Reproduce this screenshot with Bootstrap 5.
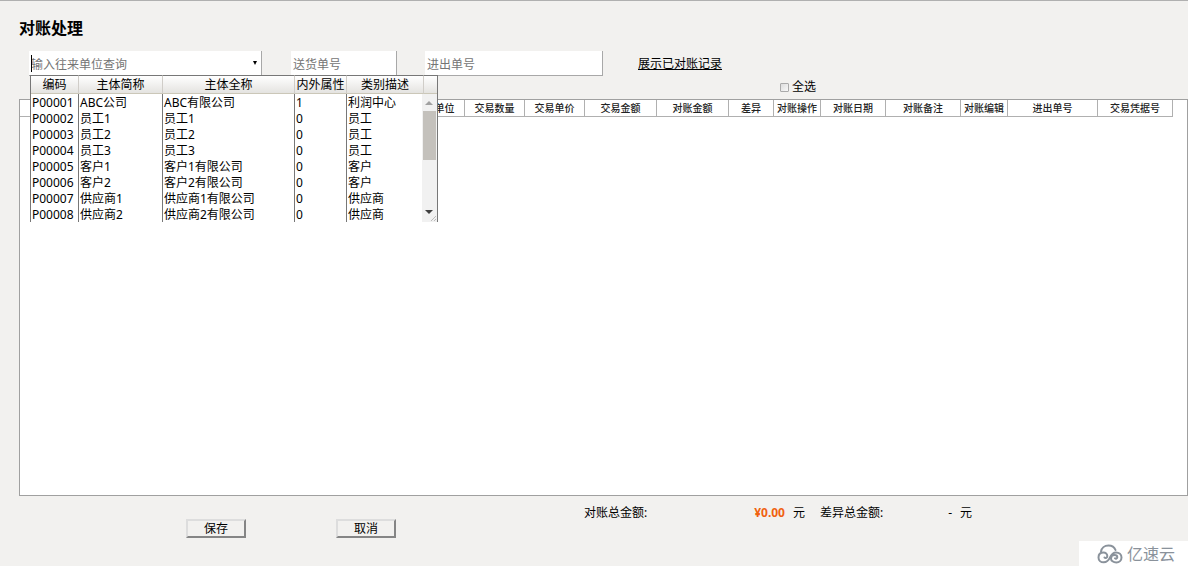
<!DOCTYPE html>
<html lang="zh-CN">
<head>
<meta charset="utf-8">
<meta name="viewport" content="width=device-width, initial-scale=1">
<title>对账处理</title>
<link rel="stylesheet" href="https://cdn.jsdelivr.net/npm/bootstrap@5.3.0/dist/css/bootstrap.min.css">
<style>
body{font:12px/16px "Noto Sans","Noto Sans CJK SC",sans-serif;color:#000;background:#f2f1ef;border-top:1px solid #b0b0b0}
h1{font-size:16px;line-height:24px;font-weight:700;padding:15px 0 0 19px}
.filters{padding:11px 0 0 29px}
.field{height:25px;border:0;border-right:1px solid #a8a8a8;border-bottom:1px solid #a8a8a8;background:#fff;font-size:12px;line-height:24px;padding:2px 2px 0;border-radius:0;outline:0;display:block}
.field::placeholder{color:#757575;opacity:1}
.combo{width:233px;margin-right:29px}
.combo .field{width:100%}
.delivery{width:106px;margin-right:28px}
.stock{width:178px;margin-right:35px}
.caret{width:1px;height:17px;left:2px;top:4px;background:#000}
.arrow{right:5px;top:10px;width:4px;height:4px}
.filters a{color:#000;line-height:25px}
.menu{left:1px;top:24px;width:408px;z-index:5;background:#fff;border-left:1px solid #777;border-right:1px solid #777}
.lookup{table-layout:fixed;width:100%;border-collapse:separate;border-spacing:0}
.lookup th{height:19px;padding:0;font-weight:400;line-height:16px;text-align:center;border-top:1px solid #777;border-bottom:1px solid #cbc7b8;border-right:1px solid #d0cdc8;background:linear-gradient(#fff,#e4e3e0);white-space:nowrap}
.lookup th:last-child{border-right:0}
.lookup td{height:16px;padding:2px 0 0 1px;line-height:14px;border-right:1px solid #777;white-space:nowrap}
.lookup td:nth-child(5){border-right:0}
.track{right:0;top:19px;width:15px;bottom:0;background:#f1f1f1}
.all{padding:3px 0 4px 780px}
.all input{appearance:none;width:9px;height:9px;margin:0;border:1px solid #aaa;border-radius:1px;background:linear-gradient(135deg,#ddd,#f8f8f8)}
.all label{padding-left:3px}
.sheet{margin-left:19px;border:1px solid #a0a0a0;background:#fff;overflow:hidden}
.grid-head{table-layout:fixed;width:1153px;border-collapse:separate;border-spacing:0;font-size:10px;line-height:16px}
.grid-head th{height:17px;padding:0;font-weight:500;color:#222;text-align:center;border-right:1px solid #b0b0b0;border-bottom:1px solid #b0b0b0;white-space:nowrap}
.bottom{height:70px;padding-left:186px}
.bottom button{width:60px;height:19px;margin:23px 90px 0 0;padding:0;border:2px solid;border-color:#ddd #858585 #858585 #ddd;background:#f2f1ef;color:#000;line-height:14px;border-radius:0}
.totals{margin:9px 0 0 98px}
.sum-label{width:100px}
.sum-value{width:101px;text-align:right}
.gap-label{width:96px;margin-left:15px}
.gap-value{width:36px;text-align:right}
.unit{margin-left:8px}
.money{color:#f0620f}
.logo{width:109px;height:25px;background:#fff;color:#8a929b;font-size:16px;line-height:24px;padding-left:18px}
</style>
</head>
<body class="d-flex flex-column min-vh-100">
<h1 class="m-0">对账处理</h1>
<form class="filters d-flex">
  <div class="combo position-relative">
    <input class="field" type="text" aria-label="往来单位" placeholder="输入往来单位查询">
    <span class="caret position-absolute"></span>
    <svg class="arrow position-absolute" viewBox="0 0 4 4"><path d="M0 0h4L2 4z"/></svg>
    <div class="menu position-absolute">
      <table class="lookup">
        <colgroup><col style="width:48px"><col style="width:84px"><col style="width:132px"><col style="width:52px"><col style="width:77px"><col></colgroup>
        <thead><tr><th>编码</th><th>主体简称</th><th>主体全称</th><th>内外属性</th><th>类别描述</th><th></th></tr></thead>
        <tbody>
          <tr><td>P00001</td><td>ABC公司</td><td>ABC有限公司</td><td>1</td><td>利润中心</td></tr>
          <tr><td>P00002</td><td>员工1</td><td>员工1</td><td>0</td><td>员工</td></tr>
          <tr><td>P00003</td><td>员工2</td><td>员工2</td><td>0</td><td>员工</td></tr>
          <tr><td>P00004</td><td>员工3</td><td>员工3</td><td>0</td><td>员工</td></tr>
          <tr><td>P00005</td><td>客户1</td><td>客户1有限公司</td><td>0</td><td>客户</td></tr>
          <tr><td>P00006</td><td>客户2</td><td>客户2有限公司</td><td>0</td><td>客户</td></tr>
          <tr><td>P00007</td><td>供应商1</td><td>供应商1有限公司</td><td>0</td><td>供应商</td></tr>
          <tr><td>P00008</td><td>供应商2</td><td>供应商2有限公司</td><td>0</td><td>供应商</td></tr>
        </tbody>
      </table>
      <svg class="track position-absolute" width="15" height="128" viewBox="0 0 15 128"><path d="M3 11h8L7 7z" fill="#a0a0a0"/><path d="M1 17h13v49H1z" fill="#c4c1bc"/><path d="M3 116h8l-4 4z" fill="#404040"/><path d="M9 127l5-5M12 127l2-2" stroke="#bbb"/></svg>
    </div>
  </div>
  <input class="field delivery" type="text" aria-label="送货单号" placeholder="送货单号">
  <input class="field stock" type="text" aria-label="进出单号" placeholder="进出单号">
  <a href="#">展示已对账记录</a>
</form>
<div class="all d-flex align-items-center"><input type="checkbox" id="all"><label for="all">全选</label></div>
<main class="sheet flex-grow-1">
  <table class="grid-head">
    <colgroup><col style="width:11px"><col style="width:374px"><col style="width:60px"><col style="width:60px"><col style="width:60px"><col style="width:72px"><col style="width:72px"><col style="width:45px"><col style="width:47px"><col style="width:65px"><col style="width:75px"><col style="width:47px"><col style="width:90px"><col style="width:75px"></colgroup>
    <thead><tr><th></th><th></th><th>交易单位</th><th>交易数量</th><th>交易单价</th><th>交易金额</th><th>对账金额</th><th>差异</th><th>对账操作</th><th>对账日期</th><th>对账备注</th><th>对账编辑</th><th>进出单号</th><th>交易凭据号</th></tr></thead>
  </table>
</main>
<footer class="bottom d-flex align-items-start position-relative">
  <button type="button">保存</button><button type="button">取消</button>
  <div class="totals d-flex">
    <span class="sum-label">对账总金额:</span><strong class="sum-value money">¥0.00</strong><span class="unit">元</span>
    <span class="gap-label">差异总金额:</span><span class="gap-value">-</span><span class="unit">元</span>
  </div>
  <div class="logo position-absolute bottom-0 end-0 d-flex align-items-center">
    <svg width="26" height="20" viewBox="0 0 26 20" fill="none" stroke="currentColor" stroke-width="2" stroke-linecap="round"><path d="M4 7.500C4.500 4 7.500 1.500 11.500 1.500c3.500 0 6 1.800 7 4.500"/><path d="M7.500 13.500c1 1 2.800.3 2.800-1.500S8.500 8.500 6.500 8.500c-3 0-5 2-5 4.900s2.200 4.900 5.200 4.900c3.300 0 5-2 6.300-4.900s3-5 6-5 5.500 2 5.500 5-2.200 5-5.200 5-5.300-1.700-5.300-4 1.800-3.400 3.500-3.400 2.800 1 2.800 2.300-1.500 1.700-2.300 1"/></svg>
    <span class="text-nowrap ps-1">亿速云</span>
  </div>
</footer>
<script src="https://cdn.jsdelivr.net/npm/bootstrap@5.3.0/dist/js/bootstrap.bundle.min.js"></script>
</body>
</html>
